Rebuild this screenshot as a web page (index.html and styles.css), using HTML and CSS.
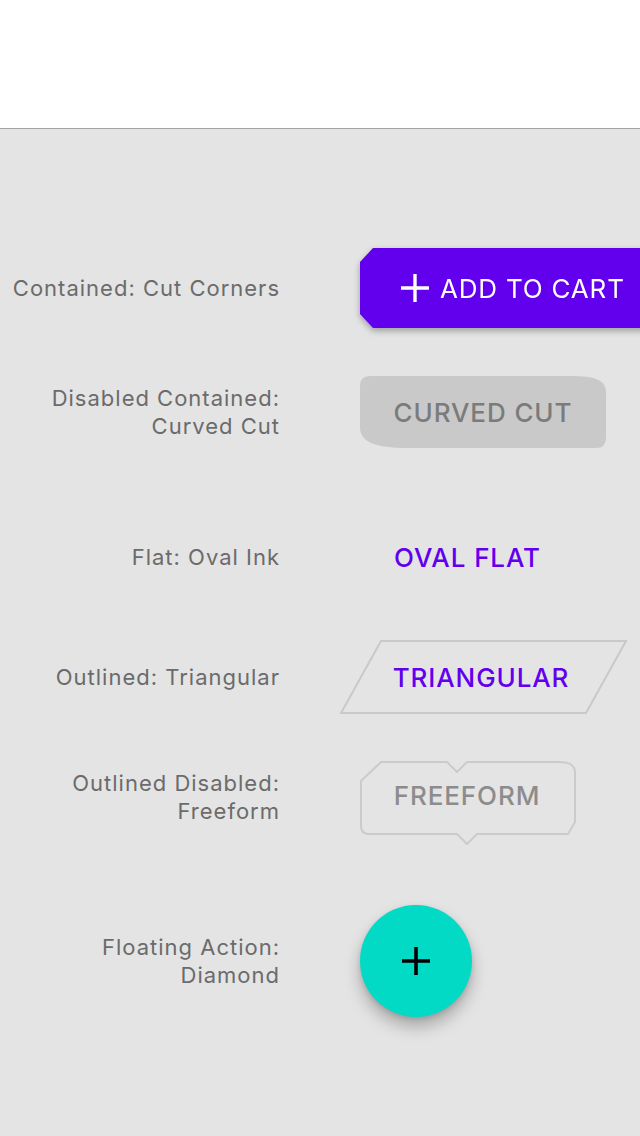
FILE: index.html
```html
<!DOCTYPE html>
<html>
<head>
<meta charset="utf-8">
<link rel="stylesheet" href="styles.css">
</head>
<body>
<header class="appbar"></header>
<main class="content">
  <div class="row row-1">
    <div class="label">Contained: Cut Corners</div>
    <div class="slot">
      <button class="btn btn-cut">
        <svg class="icon-plus" viewBox="0 0 28 28" width="28" height="28"><path d="M14 0V28M0 14H28" stroke="#fff" stroke-width="3.4"/></svg>
        <span>ADD TO CART</span>
      </button>
    </div>
  </div>
  <div class="row row-2">
    <div class="label">Disabled Contained:<br>Curved Cut</div>
    <div class="slot">
      <div class="btn btn-curved">
        <svg class="shape" viewBox="0 0 246 72" width="246" height="72"><path d="M10 0 L210 0 C236 0 246 4 246 17 L246 62 Q246 72 236 72 L47 72 C15 72 0 66 0 51 L0 10 Q0 0 10 0 Z" fill="#c9c9c9"/></svg>
        <span class="txt">CURVED CUT</span>
      </div>
    </div>
  </div>
  <div class="row row-3">
    <div class="label">Flat: Oval Ink</div>
    <div class="slot">
      <div class="btn btn-flat">OVAL FLAT</div>
    </div>
  </div>
  <div class="row row-4">
    <div class="label">Outlined: Triangular</div>
    <div class="slot slot-tri">
      <div class="btn btn-tri">
        <svg class="shape" viewBox="0 0 288 74" width="288" height="74"><polygon points="41,1 286,1 246,73 1,73" fill="none" stroke="#c9c9c9" stroke-width="2"/></svg>
        <span class="txt">TRIANGULAR</span>
      </div>
    </div>
  </div>
  <div class="row row-5">
    <div class="label">Outlined Disabled:<br>Freeform</div>
    <div class="slot">
      <div class="btn btn-free">
        <svg class="shape" viewBox="0 0 216 84" width="216" height="84"><path d="M21 1 L87 1 L97 11 L107 1 L198 1 C210 1 215 4 215 12 L215 61 L208 73 L117 73 L107 83 L97 73 L9 73 Q1 73 1 65 L1 20 Z" fill="none" stroke="#cbcbcb" stroke-width="2" stroke-linejoin="round"/></svg>
        <span class="txt">FREEFORM</span>
      </div>
    </div>
  </div>
  <div class="row row-6">
    <div class="label">Floating Action:<br>Diamond</div>
    <div class="slot">
      <button class="fab">
        <svg viewBox="0 0 28 28" width="28" height="28"><path d="M14 0V28M0 14H28" stroke="#000" stroke-width="3.6"/></svg>
      </button>
    </div>
  </div>
</main>
</body>
</html>
```
FILE: styles.css
```css
html, body {
  margin: 0;
  padding: 0;
}
body {
  width: 640px;
  height: 1136px;
  overflow: hidden;
  background: #e4e4e4;
  font-family: Inter, "Liberation Sans", sans-serif;
}
.appbar {
  height: 128px;
  background: #ffffff;
  border-bottom: 1px solid #a3a3a3;
}
.content {
  display: flex;
  flex-direction: column;
}
.row {
  display: flex;
  align-items: center;
}
.row-1 { height: 80px; margin-top: 119px; }
.row-2 { height: 72px; margin-top: 48px; }
.row-3 { height: 72px; margin-top: 73px; }
.row-4 { height: 72px; margin-top: 48px; }
.row-5 { height: 72px; margin-top: 48px; }
.row-6 { height: 112px; margin-top: 72px; }

.label {
  width: 280px;
  flex: none;
  text-align: right;
  font-size: 22px;
  letter-spacing: 1px;
  line-height: 28px;
  color: #6b6b6b;
}
.slot {
  margin-left: 80px;
  display: flex;
  align-items: center;
}
.slot-tri {
  margin-left: 60px;
}
.btn {
  font-family: Inter, "Liberation Sans", sans-serif;
  font-size: 26px;
  font-weight: 500;
  letter-spacing: 0.9px;
  position: relative;
  display: flex;
  align-items: center;
  justify-content: center;
  border: none;
  padding: 0;
}
.btn-cut {
  width: 300px;
  height: 80px;
  background: #6200ee;
  color: #ffffff;
  justify-content: flex-start;
  padding-left: 41px;
  gap: 11px;
  clip-path: polygon(13px 0, 100% 0, 100% 100%, 13px 100%, 0 calc(100% - 14px), 0 14px);
}
.btn-cut span { font-weight: 400; letter-spacing: 0.8px; }
.row-1 .slot { filter: drop-shadow(0 3px 3px rgba(0,0,0,0.3)); }
.shape {
  position: absolute;
  left: 0;
  top: 0;
}
.txt { position: relative; }
.btn-curved {
  width: 246px;
  height: 72px;
  color: #7b7b7b;
}
.btn-flat {
  width: 214px;
  height: 72px;
  color: #6200ee;
  justify-content: flex-start;
  padding-left: 34px;
}
.btn-tri {
  width: 288px;
  height: 74px;
  color: #6200ee;
}
.btn-tri .txt { left: -3px; }
.btn-free {
  width: 216px;
  height: 84px;
  margin-top: 12px;
  color: #8c8c8c;
  align-items: flex-start;
}
.btn-free .txt { top: 19px; left: -1px; }
.fab {
  width: 112px;
  height: 112px;
  border-radius: 50%;
  border: none;
  padding: 0;
  background: #02dac6;
  display: flex;
  align-items: center;
  justify-content: center;
  box-shadow: 0 10px 16px rgba(0,0,0,0.25), 0 2px 5px rgba(0,0,0,0.12);
}
```
